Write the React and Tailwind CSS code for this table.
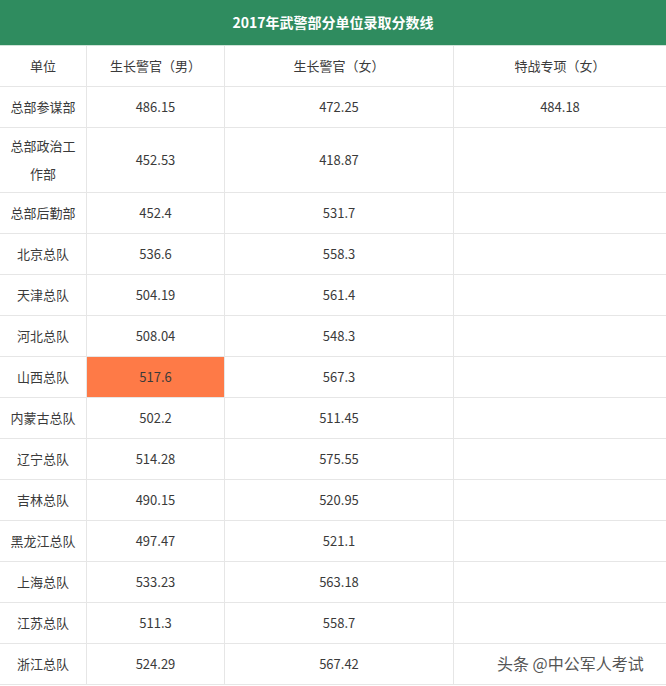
import React from "react";

const rows = [
  ["总部参谋部", "486.15", "472.25", "484.18"],
  ["总部政治工作部", "452.53", "418.87", ""],
  ["总部后勤部", "452.4", "531.7", ""],
  ["北京总队", "536.6", "558.3", ""],
  ["天津总队", "504.19", "561.4", ""],
  ["河北总队", "508.04", "548.3", ""],
  ["山西总队", "517.6", "567.3", ""],
  ["内蒙古总队", "502.2", "511.45", ""],
  ["辽宁总队", "514.28", "575.55", ""],
  ["吉林总队", "490.15", "520.95", ""],
  ["黑龙江总队", "497.47", "521.1", ""],
  ["上海总队", "533.23", "563.18", ""],
  ["江苏总队", "511.3", "558.7", ""],
  ["浙江总队", "524.29", "567.42", ""],
];

export default function App() {
  return (
    <div
      className="relative w-[666px] h-[686px] overflow-hidden bg-white text-[13px] text-[#3a3a3a]"
      style={{ fontFamily: '"Noto Sans CJK SC", "Noto Sans", sans-serif' }}
    >
      <div className="h-[46px] bg-[#2f8c5f] border-b border-[#cfe3d8] flex items-center justify-center text-white font-bold text-[14px]">
        2017年武警部分单位录取分数线
      </div>
      <div className="grid grid-cols-[87px_138px_229px_212px]">
        {["单位", "生长警官（男）", "生长警官（女）", "特战专项（女）"].map((h, i) => (
          <div
            key={i}
            className={`h-[41px] flex items-center justify-center border-b border-[#e6e6e6] ${i < 3 ? "border-r" : ""}`}
          >
            {h}
          </div>
        ))}
        {rows.map((r, ri) => {
          const tall = ri === 1;
          return r.map((c, ci) => (
            <div
              key={ri + "-" + ci}
              className={`${tall ? "h-[65px] leading-[28px]" : "h-[41px]"} flex items-center justify-center text-center border-b border-[#e6e6e6] ${ci < 3 ? "border-r" : ""} ${ri === 6 && ci === 1 ? "bg-[#fe7a47]" : ""} ${ci === 0 ? "px-[10px]" : ""}`}
            >
              {c}
            </div>
          ));
        })}
      </div>
      <div
        className="absolute left-[497px] top-[651px] text-[16px] text-[#555]"
        style={{ textShadow: "0 0 2px #fff, 0 0 2px #fff, 1px 1px 0 #fff" }}
      >
        头条 @中公军人考试
      </div>
    </div>
  );
}
